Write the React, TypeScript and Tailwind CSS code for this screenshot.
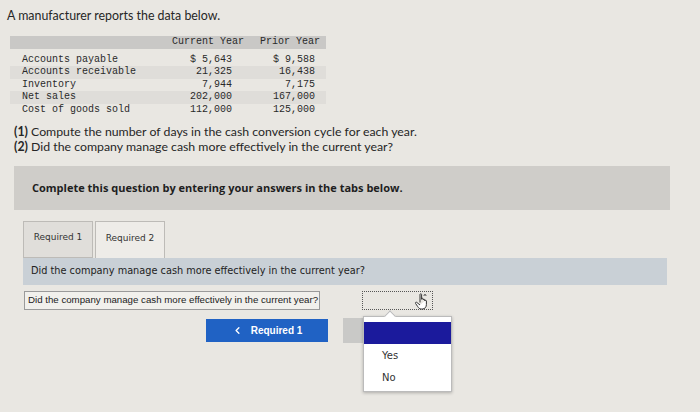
import { ChevronLeft } from 'lucide-react';

const rows = [
  { label: 'Accounts payable', cur: '$ 5,643', prior: '$ 9,588', shade: false },
  { label: 'Accounts receivable', cur: '21,325', prior: '16,438', shade: true },
  { label: 'Inventory', cur: '7,944', prior: '7,175', shade: false },
  { label: 'Net sales', cur: '202,000', prior: '167,000', shade: true },
  { label: 'Cost of goods sold', cur: '112,000', prior: '125,000', shade: false },
];

function DataTable() {
  return (
    <div className="ml-[10px] w-[316px] font-['Liberation_Mono',monospace] text-[10px] leading-[12.4px] text-[#2a2a2a]">
      <div className="flex h-[13px] bg-[#c9c8c6]">
        <div className="w-[160px]" />
        <div className="w-[74px] text-right">Current Year</div>
        <div className="w-[76px] text-right">Prior Year</div>
      </div>
      <div className="pt-[5px]">
        {rows.map((r) => (
          <div key={r.label} className={`flex ${r.shade ? 'bg-[#dfddd9]' : ''}`}>
            <div className="w-[160px] pl-[12px]">{r.label}</div>
            <div className="w-[62px] text-right">{r.cur}</div>
            <div className="w-[83px] text-right">{r.prior}</div>
          </div>
        ))}
      </div>
    </div>
  );
}

function HandCursor() {
  return (
    <svg width="16" height="17" viewBox="0 0 16 17" className="absolute right-[2px] top-[1px]">
      <path d="M6 1.5v8M6 1.5c0-1 1.6-1 1.6 0v5M7.6 6c0-1 1.6-1 1.6 0v1M9.2 7c0-1 1.6-1 1.6 0v1M10.8 8c0-1 1.6-1 1.6 0v3.5c0 2.5-1.5 4.5-4 4.5h-1c-1.8 0-2.8-1-3.8-2.6L1.6 10.5c-.6-1 .5-1.8 1.3-1L6 12" fill="#fff" stroke="#333" strokeWidth="1" strokeLinejoin="round" />
      <path d="M9 2.5l2-1.6 2 1.6z" fill="#333" />
    </svg>
  );
}

export default function App() {
  return (
    <div className="w-[700px] h-[412px] overflow-hidden bg-[#e9e7e2] font-['Lato',sans-serif] text-[#262626]">
      <div className="pl-[7px] pt-[7px] text-[12.4px] leading-[17px]">A manufacturer reports the data below.</div>

      <div className="pt-[12px]">
        <DataTable />
      </div>

      <div className="pl-[14px] pt-[8px] text-[12.3px] leading-[15px]">
        <div><span className="font-bold">(1)</span> Compute the number of days in the cash conversion cycle for each year.</div>
        <div><span className="font-bold">(2)</span> Did the company manage cash more effectively in the current year?</div>
      </div>

      <div className="ml-[14px] mt-[12px] flex h-[44px] w-[656px] items-center bg-[#cfcdc9] pl-[18px] font-['Open_Sans',sans-serif] text-[11px] font-bold text-[#1e1e1e]">
        Complete this question by entering your answers in the tabs below.
      </div>

      <div className="ml-[23px] mt-[11px] w-[644px] font-['DejaVu_Sans',sans-serif]">
        <div className="flex">
          <div className="flex h-[37px] w-[70px] items-center justify-center border border-[#bdbbb7] bg-[#e0deda] pb-[3px] text-[9px] text-[#333]">Required 1</div>
          <div className="ml-[2px] flex h-[37px] w-[70px] items-center justify-center border border-b-0 border-[#bdbbb7] bg-[#eeece8] pb-[3px] text-[9px] text-[#333]">Required 2</div>
        </div>
        <div className="flex h-[27px] items-center bg-[#c9d0d6] pl-[8px] text-[9.75px] text-[#222]">
          Did the company manage cash more effectively in the current year?
        </div>
      </div>

      <div className="relative ml-[24px] mt-[6px] flex items-center">
        <div className="flex h-[19px] w-[296px] items-center border border-[#9a9a9a] bg-[#f1f0ec] pl-[3px] font-['Liberation_Sans',sans-serif] text-[9.7px] text-[#222]">
          Did the company manage cash more effectively in the current year?
        </div>
        <div className="relative ml-[42px] h-[19px] w-[71px] border border-dotted border-[#555]">
          <HandCursor />
        </div>

        <div className="absolute left-[339px] top-[25px] flex h-[76px] w-[89px] flex-col border border-[#bbb] bg-white shadow-[0_1px_3px_rgba(0,0,0,0.25)]">
          <div className="absolute -top-[5px] left-[22px] h-[8px] w-[8px] rotate-45 border-l border-t border-[#bbb] bg-white" />
          <div className="relative mt-[5px] h-[22px] bg-[#1b1a9c]" />
          <div className="pl-[18px] pt-[1px] font-['DejaVu_Sans',sans-serif] text-[10px] leading-[22px] text-[#333]">Yes</div>
          <div className="pl-[18px] font-['DejaVu_Sans',sans-serif] text-[10px] leading-[22px] text-[#333]">No</div>
        </div>
      </div>

      <div className="ml-[206px] mt-[8px] flex items-center gap-[15px]">
        <div className="flex h-[23px] w-[122px] items-center justify-center gap-[8px] bg-[#2062c4] font-['Liberation_Sans',sans-serif] text-[10px] font-bold text-white">
          <ChevronLeft size={11} strokeWidth={3} />
          Required 1
        </div>
        <div className="h-[25px] w-[66px] bg-[#c9c9c7]" />
      </div>
    </div>
  );
}
